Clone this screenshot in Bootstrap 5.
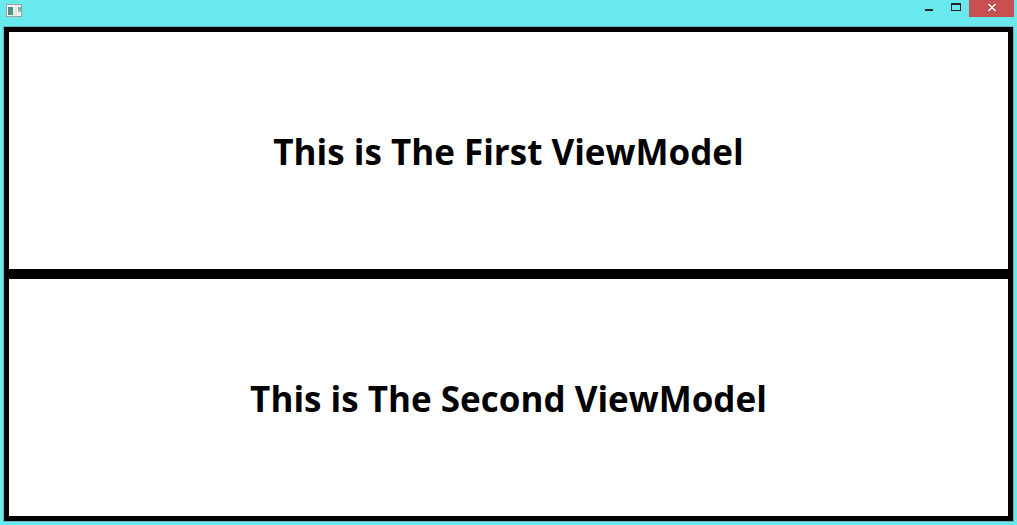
<!DOCTYPE html>
<html lang="en">
<head>
<meta charset="utf-8">
<meta name="viewport" content="width=device-width, initial-scale=1">
<title>ViewModels</title>
<link href="https://cdn.jsdelivr.net/npm/bootstrap@5.3.0/dist/css/bootstrap.min.css" rel="stylesheet">
<style>
body{background:#69e8ee;font-family:"Open Sans","Noto Sans",sans-serif;color:#000}
.titlebar{height:27px;padding:0 3px 0 6px}
.app-icon{margin-top:3px}
.win-btn{width:27px;height:17px;border:0;padding:0;background:transparent;display:flex}
.win-close{width:45px;background:#c75050}
.window-body{margin:0 4px 4px;box-shadow:0 0 0 1px #54bac0}
.pane{border:5px solid #000;background:#fff;padding-top:2px}
.pane h1{font-size:35px;line-height:48px;font-weight:700}
</style>
</head>
<body class="vh-100 d-flex flex-column overflow-hidden">
<header class="titlebar d-flex justify-content-between align-items-start">
<svg class="app-icon" width="16" height="16" viewBox="0 0 16 16" aria-hidden="true">
<defs><linearGradient id="green" x1="0" y1="0" x2="1" y2="1"><stop stop-color="#4a7fb0"/><stop offset="1" stop-color="#4fa35c"/></linearGradient></defs>
<path fill="#a29da0" d="M0 1h16v13H0z"/><path fill="#f4f4f4" d="M1 2h14v11H1z"/><path fill="url(#green)" d="M2 4h5v8H2z"/><path fill="#e4e6e8" d="M8 4h3v8H8z"/><path fill="#7ea5bd" d="M12 4h3v3h-3z"/><path fill="#9fc5a4" d="M12 7h3v2h-3z"/></svg>
<div class="d-flex">
<button class="win-btn" type="button" aria-label="Minimize"><svg width="27" height="17"><path fill="#222" d="M10 9h8v2h-8z"/></svg></button>
<button class="win-btn" type="button" aria-label="Maximize"><svg width="27" height="17"><path fill="#222" fill-rule="evenodd" d="M9 3h10v8H9zM10 5v5h8V5z"/></svg></button>
<button class="win-btn win-close" type="button" aria-label="Close"><svg width="45" height="17" shape-rendering="crispEdges"><path fill="#fff" d="M19 4h2v1h1v1h2V5h1V4h2v1h-1v1h-1v1h-1v1h1v1h1v1h1v1h-2v-1h-1V9h-2v1h-1v1h-2v-1h1V9h1V8h1V7h-1V6h-1V5h-1z"/></svg></button>
</div>
</header>
<main class="window-body flex-grow-1 d-flex flex-column">
<section class="pane flex-fill d-flex align-items-center justify-content-center"><h1 class="m-0">This is The First ViewModel</h1></section>
<section class="pane flex-fill d-flex align-items-center justify-content-center"><h1 class="m-0">This is The Second ViewModel</h1></section>
</main>
<script src="https://cdn.jsdelivr.net/npm/bootstrap@5.3.0/dist/js/bootstrap.bundle.min.js"></script>
</body>
</html>
